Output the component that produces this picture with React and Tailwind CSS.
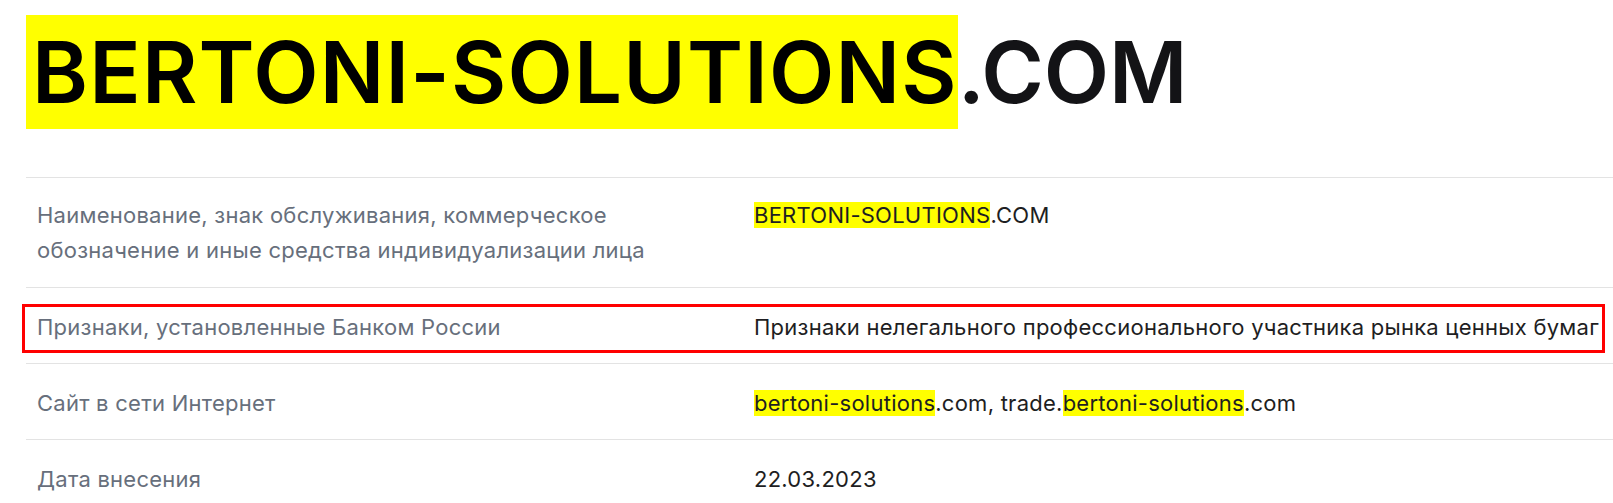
import React from "react";

const Mark = ({ children }) => <span className="bg-[#ffff00]">{children}</span>;

const rows = [
  {
    label: "Наименование, знак обслуживания, коммерческое обозначение и иные средства индивидуализации лица",
    value: (
      <>
        <Mark>BERTONI-SOLUTIONS</Mark>.COM
      </>
    ),
    tall: true,
  },
  {
    label: "Признаки, установленные Банком России",
    value: "Признаки нелегального профессионального участника рынка ценных бумаг",
    flagged: true,
  },
  {
    label: "Сайт в сети Интернет",
    value: (
      <>
        <Mark>bertoni-solutions</Mark>.com, trade.<Mark>bertoni-solutions</Mark>.com
      </>
    ),
  },
  { label: "Дата внесения", value: "22.03.2023" },
];

const Row = ({ label, value, flagged, tall }) => (
  <div
    className={`relative grid grid-cols-[717px_1fr] border-t border-[#e3e3e3] text-[22px] leading-[35px] tracking-[0.25px] ${
      tall ? "pt-5 pb-[19px]" : "pt-[22px] pb-[18px]"
    }`}
  >
    {/* red annotation frame */}
    {flagged && (
      <div className="absolute left-[-4px] right-[8px] top-[16px] h-[49px] border-[3px] border-[#ff0000] pointer-events-none" />
    )}
    <div className="pl-[11px] pr-10 text-[#676f7c]">{label}</div>
    <div className="pl-[11px] text-[#1e1e22]">{value}</div>
  </div>
);

export default function App() {
  return (
    <div className="min-h-screen bg-white pl-[26px] pt-[15px] font-['Inter','Liberation_Sans',sans-serif] overflow-hidden">
      <h1 className="flex h-[114px] items-center text-[85px] font-semibold leading-none">
        <span className="flex h-full items-center bg-[#ffff00] pl-[6px] tracking-[1.2px] text-black">BERTONI-SOLUTIONS</span>
        <span className="text-[#131316]">.COM</span>
      </h1>

      <div className="mt-[48px]">
        {rows.map((r, i) => (
          <Row key={i} {...r} />
        ))}
      </div>
    </div>
  );
}
